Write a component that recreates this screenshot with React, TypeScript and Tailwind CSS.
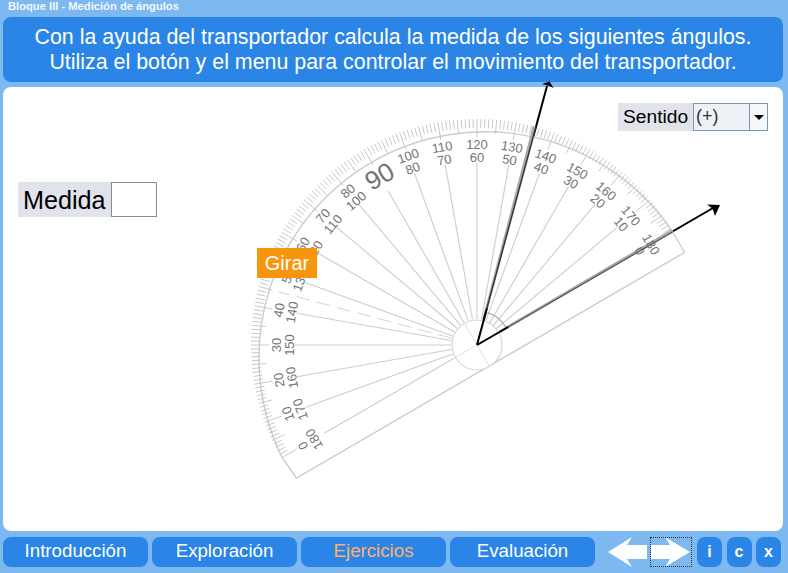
const CX = 477
const CY = 345

// protractor angle (0 = right end of the base) to a point on the page
const pt = (theta: number, r: number) => {
    const a = ((theta + 30) * Math.PI) / 180
    return { x: CX + r * Math.cos(a), y: CY - r * Math.sin(a) }
}

const range = (n: number) => Array.from({ length: n }, (_, i) => i)

function Segment({ theta, r1, r2, ...rest }: { theta: number; r1: number; r2: number } & React.SVGProps<SVGLineElement>) {
    const a = pt(theta, r1)
    const b = pt(theta, r2)
    return <line x1={a.x} y1={a.y} x2={b.x} y2={b.y} {...rest} />
}

function Label({ theta, r, size, children }: { theta: number; r: number; size: number; children: React.ReactNode }) {
    const p = pt(theta, r)
    return (
        <text
            x={p.x}
            y={p.y}
            fontSize={size}
            fill="#747474"
            textAnchor="middle"
            dominantBaseline="central"
            transform={`rotate(${60 - theta} ${p.x} ${p.y})`}
        >
            {children}
        </text>
    )
}

function Protractor() {
    const right = pt(0, 226)
    const left = pt(180, 225)
    const arcInner = pt(0, 34)
    const arcInnerEnd = pt(42, 34)
    return (
        <svg className="absolute left-[-3px] top-[-87px] overflow-visible" width="788" height="573" fontFamily="'Liberation Sans', Arial, sans-serif">
            {/* arrows under the protractor */}
            <line x1={CX} y1={CY} x2="547" y2="86" stroke="#000" strokeWidth="2" />
            <line x1={CX} y1={CY} x2="713" y2="208" stroke="#000" strokeWidth="2" />
            <path d="M542 84 L549.5 81.5 L553.5 88 L548 85.5 Z" fill="#000" />
            <path d="M720 205 L707 204.5 L712.5 208.5 L715 216 Z" fill="#000" />

            {/* protractor body */}
            <path
                d={`M${right.x} ${right.y} A226 226 0 0 0 ${left.x} ${left.y} L296.5 478 L684.5 252.5 Z`}
                fill="#ffffff"
                fillOpacity="0.72"
                stroke="#cdcdcd"
                strokeWidth="1.4"
            />

            {range(181).map((d) => {
                const long = d % 10 === 0
                const mid = d % 5 === 0
                return (
                    <Segment
                        key={d}
                        theta={d}
                        r1={226}
                        r2={long ? 208 : mid ? 212 : 217}
                        stroke="#c2c2c2"
                        strokeWidth="0.9"
                    />
                )
            })}

            {range(19).filter((i) => i !== 0 && i !== 18 && i !== 9).map((i) => (
                <Segment key={i} theta={i * 10} r1={26} r2={183} stroke="#cdcdcd" strokeWidth="1.1" />
            ))}
            <Segment theta={90} r1={26} r2={178} stroke="#cdcdcd" strokeWidth="1.1" />
            <Segment theta={180} r1={26} r2={176} stroke="#cdcdcd" strokeWidth="1.1" />
            <Segment theta={135} r1={26} r2={205} stroke="#d4d4d4" strokeWidth="1" strokeDasharray="14 7" />

            {/* base line and measured side show through the body */}
            <Segment theta={0.4} r1={26} r2={226} stroke="#a8a8a8" strokeWidth="2.6" />
            <Segment theta={0} r1={26} r2={226} stroke="#555" strokeWidth="1.2" />
            <Segment theta={45.4} r1={26} r2={226} stroke="#a8a8a8" strokeWidth="2.6" />
            <Segment theta={44.9} r1={26} r2={226} stroke="#333" strokeWidth="1.4" />

            {/* hub */}
            <circle cx={CX} cy={CY} r="25" fill="#ffffff" fillOpacity="0.6" stroke="#d6d6d6" strokeWidth="1.2" />
            <Segment theta={0} r1={0} r2={25} stroke="#e0e0e0" />
            <Segment theta={90} r1={0} r2={25} stroke="#e0e0e0" />
            <Segment theta={180} r1={0} r2={25} stroke="#e0e0e0" />
            <Segment theta={270} r1={0} r2={25} stroke="#e0e0e0" />
            <path d={`M${arcInner.x} ${arcInner.y} A34 34 0 0 0 ${arcInnerEnd.x} ${arcInnerEnd.y}`} fill="none" stroke="#ababab" strokeWidth="1.4" />
            {[10, 20, 30].map((d) => (
                <Segment key={d} theta={d} r1={25} r2={34} stroke="#d4d4d4" strokeWidth="1.2" />
            ))}

            <Segment theta={44.9} r1={0} r2={38} stroke="#000" strokeWidth="2" />
            <Segment theta={0} r1={0} r2={36} stroke="#000" strokeWidth="2" />

            {range(19).map((i) => {
                const d = i * 10
                if (d === 90) return <Label key={d} theta={90} r={195} size={26}>90</Label>
                return (
                    <g key={d}>
                        <Label theta={d} r={201} size={13}>{180 - d}</Label>
                        <Label theta={d} r={188} size={13}>{d}</Label>
                    </g>
                )
            })}
        </svg>
    )
}

function NavButton({ label, active }: { label: string; active?: boolean }) {
    return (
        <button className={`h-[30px] w-[145px] rounded-lg bg-[#2a85e6] pb-[6px] text-[18.7px] ${active ? 'text-[#ffb26b]' : 'text-white'}`}>
            {label}
        </button>
    )
}

function SmallButton({ label }: { label: string }) {
    return <button className="h-[30px] w-[25px] rounded-lg bg-[#2a85e6] text-[16px] font-bold text-white">{label}</button>
}

export default function App() {
    return (
        <div className="flex h-[573px] w-[788px] flex-col overflow-hidden bg-[#7db8f1] font-['Liberation_Sans',Arial,sans-serif]">
            <div className="h-[17px] pl-2 text-[11.2px] font-bold leading-[13px] text-[#f2f7fd]">Bloque III - Medición de ángulos</div>

            <div className="mx-[3px] h-[65px] w-[780px] rounded-lg bg-[#2a85e6] pt-[8px] text-center text-[21.4px] leading-[25px] text-white">
                <p>Con la ayuda del transportador calcula la medida de los siguientes ángulos.</p>
                <p>Utiliza el botón y el menu para controlar el movimiento del transportador.</p>
            </div>

            <main className="relative z-10 mx-[3px] mt-[5px] h-[444px] w-[780px] rounded-lg bg-white">
                <Protractor />

                {/* Medida */}
                <div className="absolute left-[15px] top-[95px] flex h-[35px] items-center">
                    <span className="flex h-full w-[93px] items-center bg-[#e0e3ea] pl-[5px] pt-[2px] text-[25.2px] text-black">Medida</span>
                    <div className="h-full w-[46px] border border-[#8a8a8a] bg-white" />
                </div>

                {/* Sentido */}
                <div className="absolute left-[615px] top-[16px] flex h-[28px] items-center">
                    <span className="flex h-full w-[75px] items-center bg-[#e0e3ea] pl-[5px] text-[19.2px] text-black">Sentido</span>
                    <div className="flex h-full w-[75px] border border-[#7d97ad] bg-[#eef1f5] text-[18px] text-[#333]">
                        <span className="flex-1 pl-[2px] leading-[25px]">(+)</span>
                        <span className="flex w-[18px] items-center justify-center border-l border-[#7d97ad] bg-[#f5f6f8]">
                            <span className="h-0 w-0 border-x-[5px] border-t-[5px] border-x-transparent border-t-black" />
                        </span>
                    </div>
                </div>

                <button className="absolute left-[254px] top-[161px] h-[30px] w-[60px] bg-[#f7950d] pb-[2px] text-[20px] text-white">Girar</button>
            </main>

            {/* Footer navigation */}
            <footer className="mt-[6px] flex items-start pl-[3px]">
                <div className="flex gap-1">
                    <NavButton label="Introducción" />
                    <NavButton label="Exploración" />
                    <NavButton label="Ejercicios" active />
                    <NavButton label="Evaluación" />
                </div>
                <svg className="ml-[13px]" width="39" height="30" viewBox="0 0 39 30">
                    <path d="M0 15 L24 0 L19 8 L39 8 L39 22 L19 22 L24 30 Z" fill="#fff" />
                </svg>
                <div className="ml-[3px] h-[30px] w-[42px] border border-dotted border-[#333]">
                    <svg width="40" height="28" viewBox="0 0 40 28">
                        <path d="M39 14 L14 -1 L19 7 L0 7 L0 21 L19 21 L14 29 Z" fill="#fff" />
                    </svg>
                </div>
                <div className="ml-[5px] flex gap-[4.5px]">
                    <SmallButton label="i" />
                    <SmallButton label="c" />
                    <SmallButton label="x" />
                </div>
            </footer>
        </div>
    )
}
